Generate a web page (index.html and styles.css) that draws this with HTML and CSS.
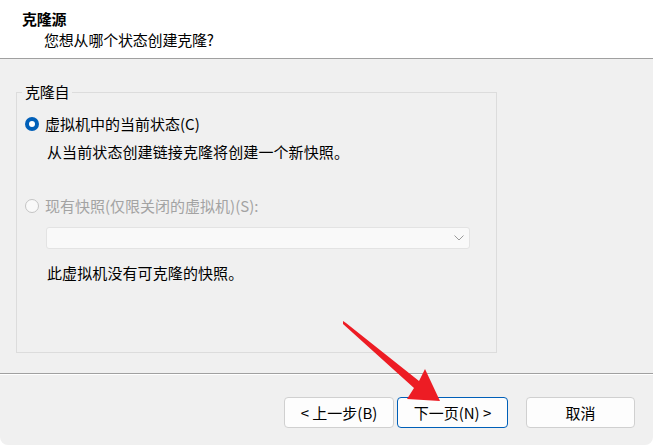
FILE: index.html
```html
<!DOCTYPE html>
<html lang="zh-CN">
<head>
<meta charset="utf-8">
<title>克隆源</title>
<link rel="stylesheet" href="styles.css">
</head>
<body>
<div class="window">
  <header class="header">
    <div class="title">克隆源</div>
    <div class="subtitle">您想从哪个状态创建克隆?</div>
  </header>
  <main class="content">
    <fieldset class="group">
      <legend class="group-label">克隆自</legend>
      <div class="radio-row checked"><span class="radio"></span><span>虚拟机中的当前状态(C)</span></div>
      <div class="desc">从当前状态创建链接克隆将创建一个新快照。</div>
      <div class="radio-row disabled"><span class="radio"></span><span>现有快照(仅限关闭的虚拟机)(S):</span></div>
      <div class="select">
        <svg class="chevron" width="10" height="6" viewBox="0 0 10 6"><path d="M0.5 0.5 L5 5 L9.5 0.5" fill="none" stroke="#9a9a9a" stroke-width="1"/></svg>
      </div>
      <div class="note">此虚拟机没有可克隆的快照。</div>
    </fieldset>
  </main>
  <footer class="footer">
    <button class="btn btn-back">&lt; 上一步(B)</button>
    <button class="btn btn-next">下一页(N) &gt;</button>
    <button class="btn btn-cancel">取消</button>
  </footer>
  <svg class="arrow" width="653" height="445" viewBox="0 0 653 445">
    <polygon points="343,321 346,323 419,381 425,369 440,401 407,399 414,388 343,324" fill="#ed1c24"/>
  </svg>
</div>
</body>
</html>
```

FILE: styles.css
```css
* { box-sizing: border-box; }
html, body {
  margin: 0;
  padding: 0;
  background: #ffffff;
}
body {
  font-family: "Noto Sans CJK SC", "Noto Sans", sans-serif;
  font-size: 15px;
  line-height: 20px;
  color: #000;
}
.window {
  position: relative;
  width: 653px;
  height: 445px;
  background: #f0f0f0;
  border-radius: 0 0 8px 8px;
  overflow: hidden;
  display: flex;
  flex-direction: column;
}
.header {
  height: 59px;
  background: #ffffff;
  border-bottom: 1px solid #a0a0a0;
  padding: 9px 0 0 22px;
}
.title {
  font-weight: 700;
  letter-spacing: -0.3px;
}
.subtitle {
  margin-top: 1px;
  margin-left: 22px;
  letter-spacing: -0.2px;
}
.content {
  height: 315px;
  padding: 23px 0 0 16px;
  border-bottom: 1px solid #a0a0a0;
}
.group {
  width: 481px;
  height: 271px;
  margin: 0;
  padding: 0;
  border: 1px solid #dcdcdc;
  min-width: 0;
}
.group-label {
  margin-left: 5px;
  padding: 0 3px;
  letter-spacing: -0.2px;
}
.radio-row {
  display: flex;
  align-items: center;
  margin-left: 8px;
  height: 20px;
  letter-spacing: 0;
}
.checked { margin-top: 12px; }
.disabled { margin-top: 34px; color: #a3a3a3; }
.radio {
  width: 14px;
  height: 14px;
  border-radius: 50%;
  margin-right: 6px;
  flex: none;
}
.checked .radio {
  background: #005fb8;
  position: relative;
}
.checked .radio::after {
  content: "";
  position: absolute;
  left: 4px;
  top: 4px;
  width: 6px;
  height: 6px;
  border-radius: 50%;
  background: #fff;
}
.disabled .radio {
  border: 1px solid #c4c4c4;
  background: #f9f9f9;
}
.desc {
  margin: 8px 0 0 30px;
  letter-spacing: 0.1px;
}
.select {
  margin: 11px 0 0 29px;
  width: 424px;
  height: 22px;
  background: #f9f9f9;
  border: 1px solid #e3e3e3;
  border-radius: 3px;
  display: flex;
  align-items: center;
  justify-content: flex-end;
  padding-right: 5px;
}
.chevron { display: block; }
.note {
  margin: 14px 0 0 30px;
  letter-spacing: 0.1px;
}
.footer {
  flex: 1;
  border-top: 1px solid #ffffff;
  display: flex;
  align-items: flex-start;
  padding: 22px 18px 0 284px;
}
.btn {
  font-family: inherit;
  font-size: 15px;
  line-height: 20px;
  height: 31px;
  padding: 0;
  background: #fdfdfd;
  border: 1px solid #d0d0d0;
  border-radius: 4px;
  color: #000;
  letter-spacing: 0;
}
.btn-back { width: 110px; }
.btn-next {
  width: 111px;
  margin-left: 3px;
  border-color: #005fb8;
}
.btn-cancel {
  width: 109px;
  margin-left: 18px;
}
.arrow {
  position: absolute;
  left: 0;
  top: 0;
  pointer-events: none;
}
```
